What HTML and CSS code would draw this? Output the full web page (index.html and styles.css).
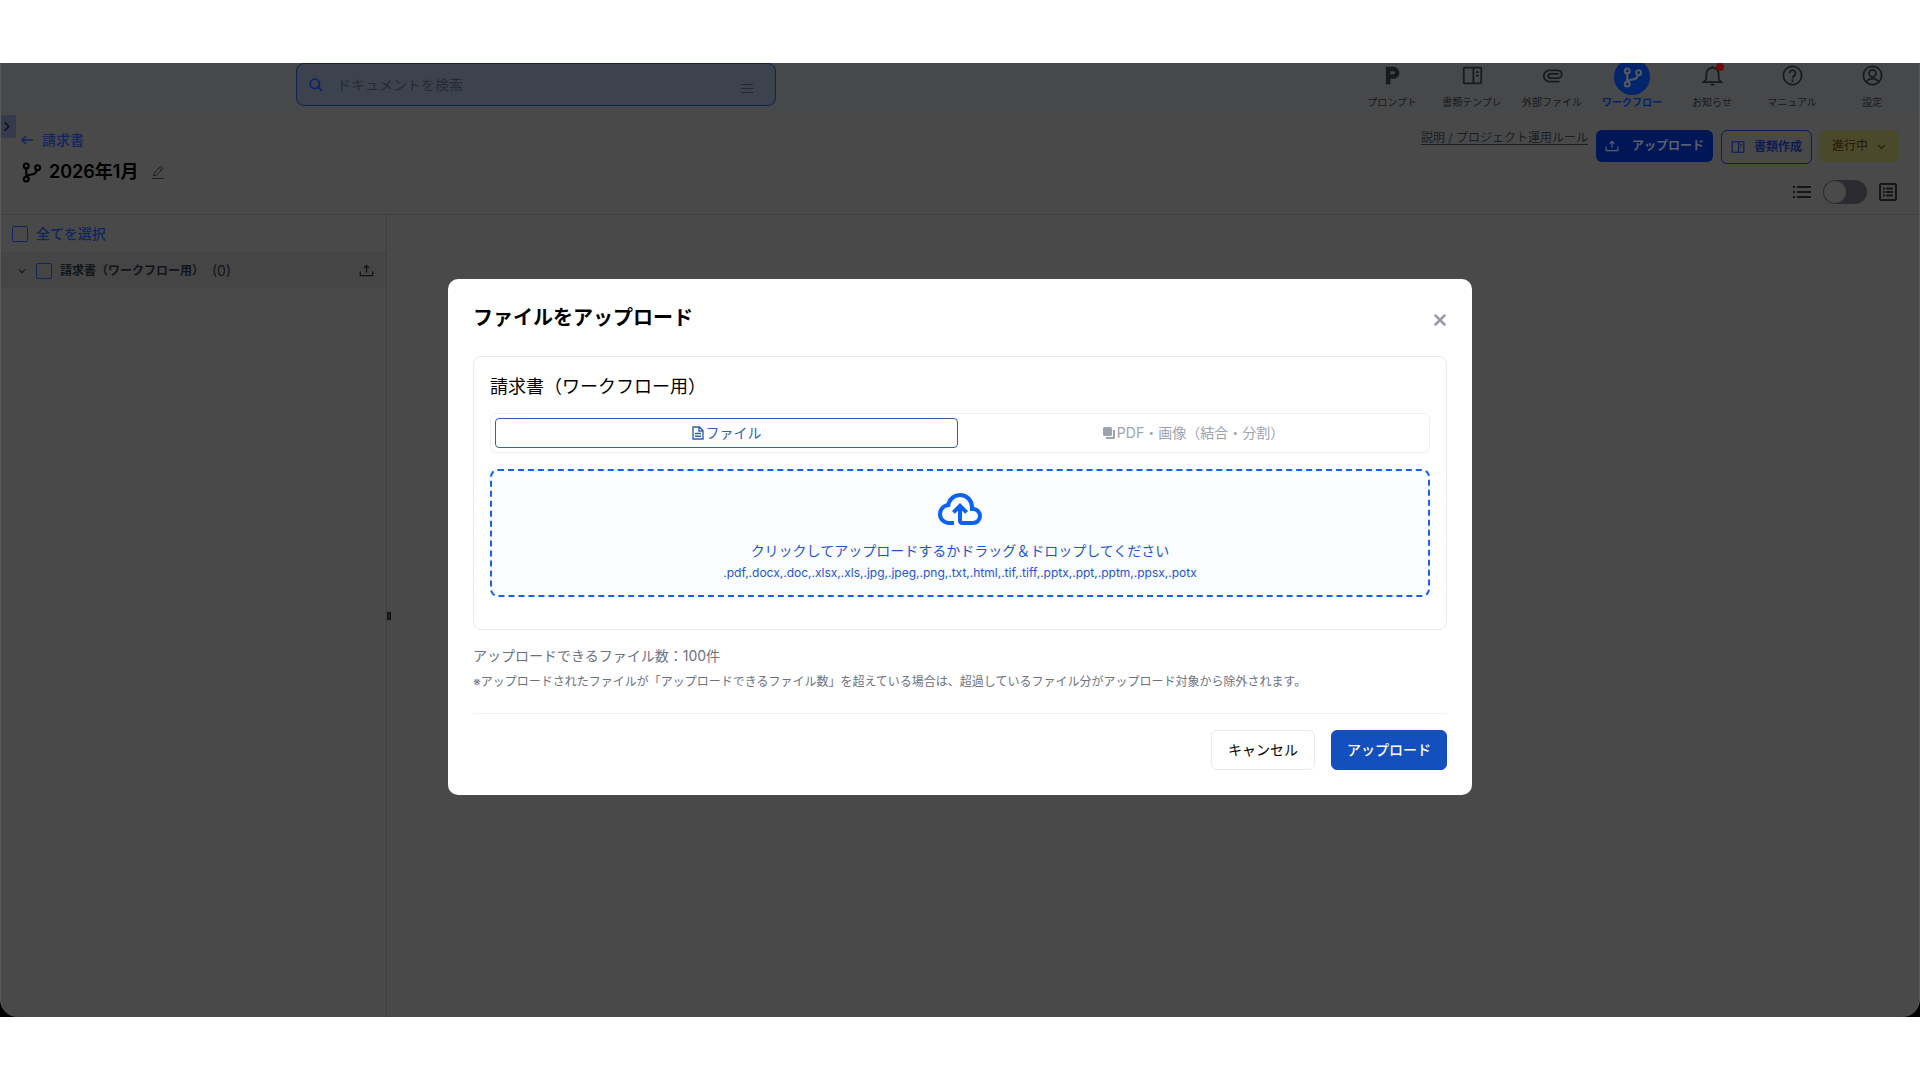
FILE: index.html
```html
<!DOCTYPE html>
<html lang="ja">
<head>
    <meta charset="UTF-8">
    <meta name="viewport" content="width=device-width, initial-scale=1.0">
    <title>2026年1月</title>
    <link rel="stylesheet" href="styles.css">
</head>
<body>
    <!-- Shared icons -->
    <svg class="sprite" aria-hidden="true">
        <symbol id="branch" viewBox="0 0 24 24">
            <g fill="none" stroke="currentColor" stroke-width="2.4" stroke-linecap="round">
                <circle cx="6" cy="4.500" r="2.800"/>
                <circle cx="6" cy="19.500" r="2.800"/>
                <circle cx="19" cy="6.500" r="2.800"/>
                <path d="M6 7.500v9M18 9.500c-1 4-4 5-7 5s-5 1-5 3"/>
            </g>
        </symbol>
        <symbol id="book" viewBox="0 0 24 24">
            <g fill="none" stroke="currentColor" stroke-width="2">
                <rect x="2" y="3" width="20" height="18" rx="1"/>
                <path d="M13 3v18M16 8h3M16 12h3"/>
            </g>
        </symbol>
        <symbol id="upload" viewBox="0 0 24 24">
            <path d="M2 13v7h20v-7M12 15V4M8 8l4-4 4 4" fill="none" stroke="currentColor" stroke-width="2" stroke-linejoin="round"/>
        </symbol>
        <symbol id="chevron" viewBox="0 0 24 24">
            <path d="M3 8l9 9 9-9" fill="none" stroke="currentColor" stroke-width="3.500"/>
        </symbol>
    </svg>

    <div class="screen">
        <div class="app">
            <!-- Header -->
            <header class="header">
                <div class="search">
                    <svg class="search-icon" viewBox="0 0 24 24" fill="none" stroke="currentColor" stroke-width="3"><circle cx="10" cy="10" r="8"/><path d="M16 16l6 6"/></svg>
                    <input type="text" aria-label="ドキュメントを検索" placeholder="ドキュメントを検索">
                    <button class="search-menu" aria-label="メニュー">
                        <svg viewBox="0 0 12 12" stroke="currentColor"><path d="M0 2.500h12M0 6.500h12M0 10.500h12"/></svg>
                    </button>
                </div>
                <nav class="nav">
                    <a href="#">
                        <svg viewBox="0 0 24 24" fill="none" stroke="currentColor" stroke-width="5"><path d="M7 22V4.500H13a4.300 4.300 0 0 1 0 8.600H8"/></svg>
                        <span>プロンプト</span>
                    </a>
                    <a href="#"><svg><use href="#book"/></svg><span>書類テンプレ</span></a>
                    <a href="#">
                        <svg viewBox="0 0 24 24" fill="none" stroke="currentColor" stroke-width="2"><path d="M20 19H8.500a6.500 6.500 0 0 1 0-13H18a4.500 4.500 0 0 1 0 9H9.500a2.500 2.500 0 0 1 0-5H19"/></svg>
                        <span>外部ファイル</span>
                    </a>
                    <a href="#" class="active">
                        <i class="circle"><svg><use href="#branch"/></svg></i>
                        <span>ワークフロー</span>
                    </a>
                    <a href="#">
                        <svg viewBox="0 0 24 24" fill="none" stroke="currentColor" stroke-width="2"><path d="M2 19.500h20c-2-1.500-3-3-3-5V10a7 7 0 0 0-14 0v4.500c0 2-1 3.500-3 5zM12 3V1M10 22.500h4"/></svg>
                        <i class="dot"></i>
                        <span>お知らせ</span>
                    </a>
                    <a href="#">
                        <svg viewBox="0 0 24 24" fill="none" stroke="currentColor" stroke-width="2"><circle cx="12" cy="12" r="10.500"/><path d="M8.500 9.500a3.500 3.500 0 1 1 5.500 2.800c-1.300.9-2 1.500-2 2.700M12 16.500v2.500"/></svg>
                        <span>マニュアル</span>
                    </a>
                    <a href="#">
                        <svg viewBox="0 0 24 24" fill="none" stroke="currentColor" stroke-width="2"><circle cx="12" cy="12" r="10.500"/><circle cx="12" cy="9.500" r="4"/><path d="M5 19.500c1.500-3 4-4 7-4s5.500 1 7 4"/></svg>
                        <span>設定</span>
                    </a>
                </nav>
            </header>

            <!-- Project title and actions -->
            <div class="titlebar">
                <button class="side-tab" aria-label="メニューを開く"><svg><use href="#chevron"/></svg></button>
                <div class="heading">
                    <a href="#" class="back">
                        <svg viewBox="0 0 12 12" fill="none" stroke="currentColor" stroke-width="1.5"><path d="M12 6H1M5 2L1 6l4 4"/></svg>
                        請求書
                    </a>
                    <div class="title-row">
                        <svg class="title-icon"><use href="#branch"/></svg>
                        <h1>2026年1月</h1>
                        <button class="edit" aria-label="編集">
                            <svg viewBox="0 0 14 14" fill="none" stroke="currentColor"><path d="M1 13.500h12M2.500 11l.7-3L9.500 1.500l2.300 2.200L5.500 10.200zM8.300 3l2.200 2.200"/></svg>
                        </button>
                    </div>
                </div>
                <div class="tools">
                    <div class="tools-row">
                        <a href="#" class="rule">説明 / プロジェクト運用ルール</a>
                        <button class="btn-upload"><svg><use href="#upload"/></svg>アップロード</button>
                        <button class="btn-doc"><svg><use href="#book"/></svg>書類作成</button>
                        <label class="status">
                            <select aria-label="ステータス"><option>進行中</option></select>
                            <svg><use href="#chevron"/></svg>
                        </label>
                    </div>
                    <div class="view-row">
                        <svg viewBox="0 0 18 18" stroke="currentColor" stroke-width="2"><path d="M0 4h2M4 4h14M0 9h2M4 9h14M0 14h2M4 14h14"/></svg>
                        <input type="checkbox" class="switch" aria-label="表示切替">
                        <svg viewBox="0 0 18 18" fill="none" stroke="currentColor" stroke-width="2"><rect x="1" y="1" width="16" height="16" rx="1"/><path d="M4 5.500h2M7 5.500h7M4 9h2M7 9h7M4 12.500h2M7 12.500h7"/></svg>
                    </div>
                </div>
            </div>

            <main class="content">
                <aside class="panel">
                    <label class="select-all"><input type="checkbox">全てを選択</label>
                    <div class="folder">
                        <svg class="folder-chevron"><use href="#chevron"/></svg>
                        <label><input type="checkbox">請求書（ワークフロー用）</label>
                        <span class="count">(0)</span>
                        <button aria-label="アップロード"><svg><use href="#upload"/></svg></button>
                    </div>
                </aside>
                <div class="splitter"><i></i></div>
            </main>
        </div>

        <!-- Upload dialog -->
        <div class="overlay">
            <section class="modal" role="dialog" aria-labelledby="modalTitle">
                <div class="modal-head">
                    <h2 id="modalTitle">ファイルをアップロード</h2>
                    <button class="close" aria-label="閉じる">
                        <svg viewBox="0 0 12 12" stroke="currentColor" stroke-width="2.500" stroke-linecap="round"><path d="M1.500 1.500l9 9M10.500 1.500l-9 9"/></svg>
                    </button>
                </div>
                <div class="card">
                    <h3>請求書（ワークフロー用）</h3>
                    <div class="tabs">
                        <button class="tab selected">
                            <svg viewBox="0 0 12 14" fill="none" stroke="currentColor" stroke-width="1.4"><path d="M1 1h6.500L11 4.500V13H1zM7 1v4h4M3 7.500h6M3 10.200h6"/></svg>ファイル
                        </button>
                        <button class="tab">
                            <svg viewBox="0 0 12 14"><rect y="1" width="9" height="9" rx="1.500" fill="currentColor"/><path d="M11 4v7.500a.5.500 0 0 1-.5.500H3" fill="none" stroke="currentColor" stroke-width="2"/></svg>PDF・画像（結合・分割）
                        </button>
                    </div>
                    <label class="drop">
                        <input type="file" multiple>
                        <svg viewBox="0 0 24 24" fill="currentColor"><path d="M6.500 20q-2.280 0-3.890-1.570Q1 16.850 1 14.580q0-1.950 1.170-3.480q1.180-1.530 3.080-1.950q.63-2.300 2.500-3.720Q9.630 4 12 4q2.930 0 4.960 2.040Q19 8.070 19 11q1.730.2 2.860 1.500q1.140 1.280 1.140 3q0 1.880-1.310 3.190T18.500 20H13q-.82 0-1.410-.59Q11 18.830 11 18v-5.150L9.400 14.400L8 13l4-4l4 4l-1.400 1.400l-1.600-1.550V18h5.500q1.050 0 1.770-.73q.73-.72.73-1.770t-.73-1.770Q19.550 13 18.500 13H17v-2q0-2.070-1.460-3.540Q14.080 6 12 6Q9.930 6 8.460 7.460Q7 8.930 7 11h-.5q-1.450 0-2.470 1.030Q3 13.050 3 14.500T4.030 17q1.020 1 2.470 1H9v2z"/></svg>
                        <span>クリックしてアップロードするかドラッグ＆ドロップしてください</span>
                        <small>.pdf,.docx,.doc,.xlsx,.xls,.jpg,.jpeg,.png,.txt,.html,.tif,.tiff,.pptx,.ppt,.pptm,.ppsx,.potx</small>
                    </label>
                </div>
                <p class="limit">アップロードできるファイル数：100件</p>
                <p class="note">※アップロードされたファイルが「アップロードできるファイル数」を超えている場合は、超過しているファイル分がアップロード対象から除外されます。</p>
                <div class="modal-foot">
                    <button class="cancel">キャンセル</button>
                    <button class="submit">アップロード</button>
                </div>
            </section>
        </div>
    </div>
</body>
</html>
```
FILE: styles.css
```css
* {
    box-sizing: border-box;
}
body {
    margin: 0;
    padding: 63px 0;
    min-height: 100vh;
    display: flex;
    flex-direction: column;
    background: #fff;
    font-family: Inter, "Noto Sans CJK JP", sans-serif;
    font-size: 14px;
    line-height: 20px;
}
h1, h2, h3, p {
    margin: 0;
}
button, input, select {
    margin: 0;
    padding: 0;
    border: none;
    background: none;
    color: inherit;
    font: inherit;
}
button {
    cursor: pointer;
}
a {
    color: inherit;
    text-decoration: none;
}
svg {
    display: block;
    flex: none;
}
.sprite {
    position: absolute;
    width: 0;
    height: 0;
}
.screen {
    position: relative;
    flex: 1;
    display: flex;
    background: #000;
}

/* Dimmed page */
.app {
    flex: 1;
    display: flex;
    flex-direction: column;
    overflow: hidden;
    background: #494949;
    border: solid #5a5a5a;
    border-width: 0 1px;
    border-radius: 0 0 18px 18px;
}
.header {
    display: flex;
    justify-content: space-between;
    height: 52px;
    padding: 0 7px 0 295px;
    background: #47484a;
}
.search {
    display: flex;
    align-items: center;
    width: 480px;
    height: 43px;
    padding: 0 21px 0 12px;
    background: #3d434d;
    border: 1px solid #0f2450;
    border-radius: 8px;
    color: #0a2272;
}
.search-icon {
    width: 14px;
    height: 14px;
}
.search input {
    flex: 1;
    padding: 0 14px;
    outline: none;
}
.search input::placeholder {
    color: #252a32;
    opacity: 1;
}
.search-menu {
    padding-top: 6px;
    color: #23272f;
}
.search-menu svg {
    width: 14px;
    height: 12px;
}
.nav {
    display: flex;
}
.nav a {
    position: relative;
    display: flex;
    flex-direction: column;
    align-items: center;
    justify-content: space-between;
    width: 80px;
    height: 46px;
    padding-top: 2px;
    color: #17191e;
    font-size: 10px;
    line-height: 14px;
}
.nav svg {
    width: 21px;
    height: 21px;
}
.nav .active {
    padding: 0;
    color: #02226a;
    font-weight: 700;
}
.circle {
    display: flex;
    align-items: center;
    justify-content: center;
    width: 36px;
    height: 36px;
    margin-top: -4px;
    background: #02256b;
    border-radius: 50%;
    color: #555a62;
}
.dot {
    position: absolute;
    top: 0;
    right: 28px;
    width: 8px;
    height: 8px;
    border-radius: 50%;
    background: #6a0d0d;
}
.titlebar {
    position: relative;
    display: flex;
    justify-content: space-between;
    height: 100px;
    padding: 15px 20px 0;
    border-bottom: 1px solid #3f3f3f;
}
.side-tab {
    position: absolute;
    left: 0;
    top: 0;
    width: 15px;
    height: 23px;
    background: #353a4c;
    color: #10141e;
}
.side-tab svg {
    width: 11px;
    height: 11px;
    transform: rotate(-90deg);
}
.back {
    display: flex;
    align-items: center;
    gap: 9px;
    color: #0f2560;
    font-weight: 500;
}
.back svg {
    width: 12px;
    height: 12px;
}
.title-row {
    display: flex;
    align-items: center;
    margin-top: 9px;
}
.title-icon {
    width: 21px;
    height: 21px;
}
.title-row h1 {
    margin: 0 13px 0 7px;
    font-size: 18px;
    line-height: 26px;
    font-weight: 600;
}
.edit {
    color: #1e1e1e;
}
.edit svg {
    width: 14px;
    height: 14px;
}
.tools {
    display: flex;
    flex-direction: column;
    align-items: flex-end;
    gap: 16px;
    font-size: 12px;
}
.tools-row {
    display: flex;
    align-items: flex-start;
    gap: 8px;
    height: 34px;
}
.rule {
    line-height: 16px;
    color: #1a1d24;
    text-decoration: underline;
    text-underline-offset: 2px;
}
.btn-upload,
.btn-doc,
.status {
    display: flex;
    align-items: center;
    height: 32px;
    padding: 0 9px;
    gap: 13px;
    border-radius: 6px;
    font-weight: 700;
}
.btn-upload svg,
.btn-doc svg {
    width: 14px;
    height: 14px;
}
.btn-upload {
    background: #001656;
    color: #5a6072;
}
.btn-doc {
    height: 34px;
    gap: 9px;
    border: 1px solid #0a1c52;
    color: #0a1c52;
}
.status {
    padding: 0 13px 0 12px;
    gap: 8px;
    background: #4b492c;
    color: #2e1d0c;
    font-weight: 500;
}
.status select {
    appearance: none;
}
.status svg {
    width: 9px;
    height: 9px;
}
.view-row {
    display: flex;
    align-items: center;
    gap: 12px;
    padding-right: 2px;
    color: #14161a;
}
.view-row svg {
    width: 18px;
    height: 18px;
}
.switch {
    appearance: none;
    width: 44px;
    height: 24px;
    padding: 1px;
    border-radius: 12px;
    background: #2b2c32;
}
.switch::before {
    content: "";
    display: block;
    width: 22px;
    height: 22px;
    border-radius: 50%;
    background: #4a4a4a;
}
.content {
    flex: 1;
    display: flex;
}
.panel {
    width: 386px;
    border-right: 1px solid #3f3f3f;
}
.panel input {
    appearance: none;
    width: 16px;
    height: 16px;
    border: 1px solid #0f2560;
    border-radius: 2px;
}
.panel label {
    display: flex;
    align-items: center;
    gap: 8px;
}
.select-all {
    height: 38px;
    padding: 0 11px;
    border-bottom: 1px solid #444;
    color: #0f2560;
    font-weight: 500;
}
.folder {
    display: flex;
    align-items: center;
    height: 35px;
    padding: 0 12px 0 17px;
    background: #454545;
    color: #111419;
}
.folder label {
    margin-left: 10px;
    font-size: 12px;
    font-weight: 700;
}
.folder-chevron {
    width: 8px;
    height: 8px;
}
.count {
    margin-left: 8px;
}
.folder button {
    margin-left: auto;
}
.folder button svg {
    width: 15px;
    height: 15px;
}
.splitter {
    display: flex;
    align-items: center;
}
.splitter i {
    width: 4px;
    height: 8px;
    border: 1px solid #111;
    background: #222;
}

/* Upload dialog */
.overlay {
    position: absolute;
    inset: 0;
    display: flex;
    align-items: center;
    justify-content: center;
    padding-bottom: 7px;
}
.modal {
    width: 100%;
    max-width: 1024px;
    padding: 25px;
    background: #fff;
    border-radius: 10px;
}
.modal-head {
    display: flex;
    align-items: center;
    justify-content: space-between;
    height: 28px;
    margin-bottom: 24px;
}
.modal-head h2 {
    font-size: 20px;
    line-height: 28px;
    font-weight: 700;
}
.close {
    padding: 4px 1px 0;
    color: #9a9ca8;
}
.close svg {
    width: 12px;
    height: 12px;
}
.card {
    padding: 16px 16px 32px;
    border: 1px solid #e9eaee;
    border-radius: 8px;
}
.card h3 {
    font-size: 18px;
    line-height: 28px;
    font-weight: 400;
}
.tabs {
    display: flex;
    gap: 4px;
    margin: 12px 0 16px;
    padding: 4px;
    border: 1px solid #eff0f2;
    border-radius: 6px;
}
.tab {
    flex: 1;
    display: flex;
    align-items: center;
    justify-content: center;
    gap: 2px;
    height: 30px;
    border: 1px solid transparent;
    border-radius: 4px;
    color: #9ca3af;
}
.tab svg {
    width: 12px;
    height: 14px;
}
.tab.selected {
    border-color: #2f62a8;
    color: #2f62b0;
}
.drop {
    display: flex;
    flex-direction: column;
    align-items: center;
    padding: 14px 16px 11px;
    border: 2px dashed #1463ea;
    border-radius: 8px;
    background: #fbfcfe;
    color: #1b55d9;
    cursor: pointer;
}
.drop input {
    position: absolute;
    width: 1px;
    height: 1px;
    opacity: 0;
}
.drop svg {
    width: 48px;
    height: 48px;
    margin-bottom: 7px;
    color: #0b62f5;
}
.drop span {
    line-height: 22px;
}
.drop small {
    font-size: 12px;
    line-height: 22px;
}
.limit {
    margin-top: 16px;
    color: #6b7280;
}
.note {
    margin: 6px 0 21px;
    color: #6b7280;
    font-size: 12px;
}
.modal-foot {
    display: flex;
    justify-content: flex-end;
    gap: 16px;
    padding-top: 16px;
    border-top: 1px solid #eff0f2;
}
.cancel,
.submit {
    height: 40px;
    padding: 0 16px;
    border: 1px solid #e9eaee;
    border-radius: 6px;
}
.submit {
    padding: 0 15px;
    border-color: #134fbd;
    background: #134fbd;
    color: #fff;
    font-weight: 500;
}
```
